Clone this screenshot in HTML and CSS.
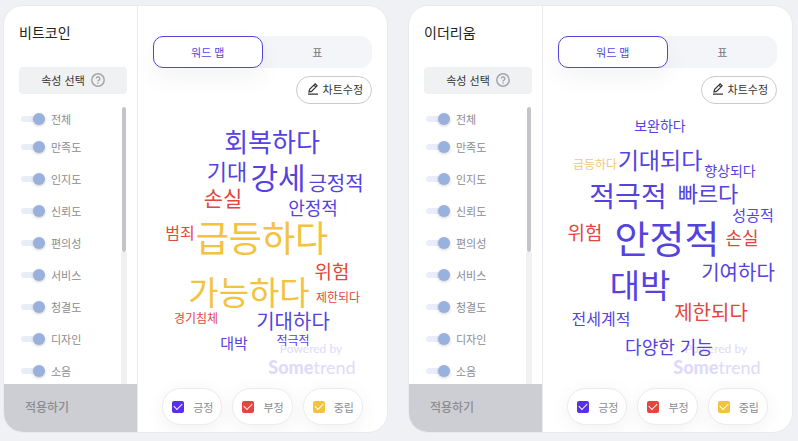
FILE: index.html
```html
<!DOCTYPE html>
<html lang="ko">
<head>
    <meta charset="UTF-8">
    <meta name="viewport" content="width=device-width, initial-scale=1.0">
    <title>Sometrend</title>
    <link rel="stylesheet" href="styles.css">
</head>
<body>

<div class="container">

    <!-- Bitcoin -->
    <section class="card">
        <div class="sidebar">
            <h2>비트코인</h2>
            <button type="button" class="select-button">속성 선택
                <svg class="help-icon" viewBox="0 0 14 14"><circle cx="7" cy="7" r="6.2"/><path d="M5.2 5.6a1.8 1.8 0 1 1 2.7 1.6c-.6.3-.9.6-.9 1.2M7 9.5v1.2"/></svg>
            </button>
            <div class="attributes">
                <div class="attribute-list">
                    <label><input type="checkbox" class="switch" checked>전체</label>
                    <label><input type="checkbox" class="switch" checked>만족도</label>
                    <label><input type="checkbox" class="switch" checked>인지도</label>
                    <label><input type="checkbox" class="switch" checked>신뢰도</label>
                    <label><input type="checkbox" class="switch" checked>편의성</label>
                    <label><input type="checkbox" class="switch" checked>서비스</label>
                    <label><input type="checkbox" class="switch" checked>청결도</label>
                    <label><input type="checkbox" class="switch" checked>디자인</label>
                    <label><input type="checkbox" class="switch" checked>소음</label>
                </div>
                <div class="scrollbar"><div class="thumb"></div></div>
            </div>
            <button type="button" class="apply-button">적용하기</button>
        </div>
        <div class="content">
            <div class="tabs">
                <button type="button" class="tab active">워드 맵</button>
                <button type="button" class="tab">표</button>
            </div>
            <button type="button" class="edit-button">
                <svg class="edit-icon" viewBox="0 0 12 12"><path d="M2 9l.6-2.6L8.2.9l1.9 1.9-5.6 5.6zM7 2.2l1.8 1.8"/><path d="M1 11.2h10"/></svg>차트수정
            </button>
            <svg class="wordmap" viewBox="0 0 249 278">
                <g class="watermark">
                    <text x="173" y="249" font-size="12">Powered by</text>
                    <text x="174" y="270" font-size="18"><tspan class="bold">Some</tspan>trend</text>
                </g>
                <g class="positive">
                    <text x="134" y="48" font-size="26">회복하다</text>
                    <text x="89" y="76" font-size="22">기대</text>
                    <text x="140" y="85" font-size="30">강세</text>
                    <text x="198" y="87" font-size="20">긍정적</text>
                    <text x="175" y="111" font-size="18">안정적</text>
                    <text x="155" y="225" font-size="20">기대하다</text>
                    <text x="96" y="245" font-size="15">대박</text>
                    <text x="155" y="241" font-size="12">적극적</text>
                </g>
                <g class="negative">
                    <text x="85" y="102" font-size="21">손실</text>
                    <text x="42" y="135" font-size="16">범죄</text>
                    <text x="194" y="175" font-size="19">위험</text>
                    <text x="200" y="198" font-size="12">제한되다</text>
                    <text x="58" y="219" font-size="12">경기침체</text>
                </g>
                <g class="neutral">
                    <text x="124" y="148" font-size="36">급등하다</text>
                    <text x="111" y="201" font-size="33">가능하다</text>
                </g>
            </svg>
            <div class="legend">
                <label><input type="checkbox" class="check positive" checked>긍정</label>
                <label><input type="checkbox" class="check negative" checked>부정</label>
                <label><input type="checkbox" class="check neutral" checked>중립</label>
            </div>
        </div>
    </section>

    <!-- Ethereum -->
    <section class="card">
        <div class="sidebar">
            <h2>이더리움</h2>
            <button type="button" class="select-button">속성 선택
                <svg class="help-icon" viewBox="0 0 14 14"><circle cx="7" cy="7" r="6.2"/><path d="M5.2 5.6a1.8 1.8 0 1 1 2.7 1.6c-.6.3-.9.6-.9 1.2M7 9.5v1.2"/></svg>
            </button>
            <div class="attributes">
                <div class="attribute-list">
                    <label><input type="checkbox" class="switch" checked>전체</label>
                    <label><input type="checkbox" class="switch" checked>만족도</label>
                    <label><input type="checkbox" class="switch" checked>인지도</label>
                    <label><input type="checkbox" class="switch" checked>신뢰도</label>
                    <label><input type="checkbox" class="switch" checked>편의성</label>
                    <label><input type="checkbox" class="switch" checked>서비스</label>
                    <label><input type="checkbox" class="switch" checked>청결도</label>
                    <label><input type="checkbox" class="switch" checked>디자인</label>
                    <label><input type="checkbox" class="switch" checked>소음</label>
                </div>
                <div class="scrollbar"><div class="thumb"></div></div>
            </div>
            <button type="button" class="apply-button">적용하기</button>
        </div>
        <div class="content">
            <div class="tabs">
                <button type="button" class="tab active">워드 맵</button>
                <button type="button" class="tab">표</button>
            </div>
            <button type="button" class="edit-button">
                <svg class="edit-icon" viewBox="0 0 12 12"><path d="M2 9l.6-2.6L8.2.9l1.9 1.9-5.6 5.6zM7 2.2l1.8 1.8"/><path d="M1 11.2h10"/></svg>차트수정
            </button>
            <svg class="wordmap" viewBox="0 0 249 278">
                <g class="watermark">
                    <text x="173" y="249" font-size="12">Powered by</text>
                    <text x="174" y="270" font-size="18"><tspan class="bold">Some</tspan>trend</text>
                </g>
                <g class="positive">
                    <text x="117" y="27" font-size="14">보완하다</text>
                    <text x="117" y="65" font-size="23">기대되다</text>
                    <text x="187" y="72" font-size="14">향상되다</text>
                    <text x="85" y="103" font-size="28">적극적</text>
                    <text x="165" y="98" font-size="22">빠르다</text>
                    <text x="210" y="117" font-size="15">성공적</text>
                    <text x="124" y="149" font-size="38">안정적</text>
                    <text x="195" y="176" font-size="20">기여하다</text>
                    <text x="97" y="194" font-size="33">대박</text>
                    <text x="58" y="221" font-size="16">전세계적</text>
                    <text x="126" y="250" font-size="18">다양한 기능</text>
                </g>
                <g class="negative">
                    <text x="42" y="136" font-size="19">위험</text>
                    <text x="199" y="141" font-size="18">손실</text>
                    <text x="168" y="216" font-size="20">제한되다</text>
                </g>
                <g class="neutral">
                    <text x="52" y="65" font-size="12" class="light">급등하다</text>
                </g>
            </svg>
            <div class="legend">
                <label><input type="checkbox" class="check positive" checked>긍정</label>
                <label><input type="checkbox" class="check negative" checked>부정</label>
                <label><input type="checkbox" class="check neutral" checked>중립</label>
            </div>
        </div>
    </section>

</div>

</body>
</html>
```

FILE: styles.css
```css
* { box-sizing: border-box; }
body { margin: 0; font-family: "Noto Sans CJK KR", sans-serif; font-size: 11px; line-height: 16px; background-color: #eff1f4; color: #333; }
button { font: inherit; color: inherit; cursor: pointer; }
input { margin: 0; appearance: none; flex: none; }

.container { display: flex; gap: 20px; padding: 5px 5px 8px 3px; }
.card { flex: 1; display: flex; min-width: 0; background-color: #fff; border: 1px solid #e9eaec; border-radius: 20px; overflow: hidden; }

/* Sidebar */
.sidebar { width: 134px; flex: none; display: flex; flex-direction: column; border-right: 1px solid #e9eaec; }
.sidebar h2 { margin: 16px 15px 25px; font-size: 14px; line-height: 20px; font-weight: 400; color: #222; }
.select-button { display: flex; align-items: center; justify-content: center; gap: 6px; height: 27px; margin: 0 10px 13px 15px; padding: 0 0 1px; border: none; border-radius: 4px; background-color: #f0f1f3; }
.help-icon { width: 14px; height: 14px; fill: none; stroke: #a5a6aa; stroke-width: 1.5; }
.attributes { display: flex; justify-content: space-between; max-height: 277px; padding: 0 10px 0 17px; overflow: hidden; }
.attribute-list label { display: flex; align-items: center; gap: 6px; height: 32px; color: #8b8c90; }
.attribute-list label:first-child { height: 24px; }
.switch { display: flex; align-items: center; justify-content: flex-end; width: 24px; height: 6px; background-color: #e8edf8; border-radius: 3px; }
.switch::before { content: ""; flex: none; width: 12px; height: 12px; border-radius: 50%; background-color: #9ab0dd; box-shadow: 0 1px 3px rgba(0, 0, 0, 0.2); }
.scrollbar { width: 6px; padding: 0 1px; background: linear-gradient(#fff, #fff) top / 100% 145px no-repeat #f0f1f3; }
.thumb { height: 145px; border-radius: 2px; background-color: #c4c5c9; }
.apply-button { height: 48px; padding: 0 21px 2px; border: none; background-color: #cdced4; font-size: 12px; font-weight: 500; color: #8b8c90; text-align: left; }

/* Content */
.content { flex: 1; min-width: 0; display: flex; flex-direction: column; padding-top: 30px; }
.tabs { display: flex; margin: 0 15px 8px; border-radius: 12px; background-color: #f4f5f8; }
.tab { flex: 1; height: 32px; padding: 0; border: 1px solid transparent; border-radius: 10px; background: none; color: #77787c; }
.tab.active { border-color: #5443df; background-color: #fff; color: #5443df; box-shadow: 0 10px 24px rgba(0, 0, 0, 0.05); }
.edit-button { position: relative; display: flex; align-items: center; align-self: flex-end; gap: 4px; height: 28px; margin-right: 15px; padding: 0 8px 2px 10px; border: 1px solid #c9cad0; border-radius: 14px; background-color: #fff; }
.edit-icon { width: 12px; height: 12px; fill: none; stroke: #333; stroke-width: 1.2; }
.wordmap { display: block; width: 100%; }
.wordmap text { text-anchor: middle; }
.wordmap .positive { fill: #5443df; }
.wordmap .negative { fill: #e2473e; }
.wordmap .neutral { fill: #f3c340; }
.wordmap .light { fill: #f3c778; }
.wordmap .watermark { fill: #dedaf9; font-family: Lato, sans-serif; }
.wordmap .bold { font-weight: 900; }

/* Legend */
.legend { display: flex; justify-content: center; gap: 10px; margin: 6px 0; }
.legend label { display: flex; align-items: center; gap: 9px; height: 37px; padding: 0 8px 0 9px; border: 1px solid #eaebed; border-radius: 19px; background-color: #fff; color: #8b8c90; box-shadow: 0 4px 20px rgba(0, 0, 0, 0.06); }
.check { display: flex; align-items: center; justify-content: center; width: 12px; height: 12px; border-radius: 2px; }
.check::before { content: ""; width: 7px; height: 4px; margin-bottom: 2px; border-left: 1px solid #fff; border-bottom: 1px solid #fff; transform: rotate(-45deg); }
.check.positive { background-color: #5930e8; }
.check.negative { background-color: #e2473e; }
.check.neutral { background-color: #f3c340; }
```
